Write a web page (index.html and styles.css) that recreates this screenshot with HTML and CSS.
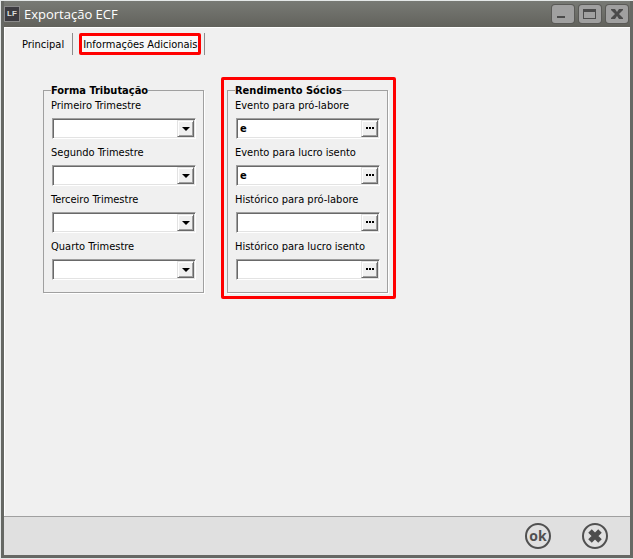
FILE: index.html
```html
<!DOCTYPE html>
<html lang="pt-BR">

<head>
    <meta charset="UTF-8">
    <meta name="viewport" content="width=device-width, initial-scale=1.0">
    <title>Exportação ECF</title>
    <link rel="stylesheet" href="styles.css">
</head>

<body>
    <div class="window">
        <header class="titlebar">
            <span class="app-icon">LF</span>
            <h1>Exportação ECF</h1>
            <div class="window-buttons">
                <button type="button" aria-label="Minimizar">
                    <svg width="22" height="18" viewBox="0 0 22 18"><path d="M5 11h8v2H5z" fill="#4b4b4b"/></svg>
                </button>
                <button type="button" aria-label="Maximizar">
                    <svg width="22" height="18" viewBox="0 0 22 18"><path d="M4 4h13v10H4zM5 7v6h11V7z" fill="#4b4b4b" fill-rule="evenodd"/></svg>
                </button>
                <button type="button" aria-label="Fechar">
                    <svg width="22" height="18" viewBox="0 0 22 18"><path d="M5 4h4l2 3 2-3h4v1l-4 4 4 4v1h-4l-2-3-2 3H5v-1l4-4-4-4z" fill="#4b4b4b"/></svg>
                </button>
            </div>
        </header>

        <main class="content">
            <nav class="tabs">
                <button type="button" class="tab">Principal</button>
                <button type="button" class="tab active"><span>Informações Adicionais</span></button>
            </nav>

            <form class="groups" id="ecf">
                <fieldset class="group">
                    <legend>Forma Tributação</legend>
                    <label for="tri1">Primeiro Trimestre</label>
                    <div class="field">
                        <select id="tri1"><option></option></select>
                        <span class="arrow"></span>
                    </div>
                    <label for="tri2">Segundo Trimestre</label>
                    <div class="field">
                        <select id="tri2"><option></option></select>
                        <span class="arrow"></span>
                    </div>
                    <label for="tri3">Terceiro Trimestre</label>
                    <div class="field">
                        <select id="tri3"><option></option></select>
                        <span class="arrow"></span>
                    </div>
                    <label for="tri4">Quarto Trimestre</label>
                    <div class="field">
                        <select id="tri4"><option></option></select>
                        <span class="arrow"></span>
                    </div>
                </fieldset>

                <div class="highlight">
                    <fieldset class="group">
                        <legend>Rendimento Sócios</legend>
                        <label for="evento-pro">Evento para pró-labore</label>
                        <div class="field">
                            <input type="text" id="evento-pro" value="e">
                            <button type="button" class="search" aria-label="Pesquisar"><svg width="9" height="4"><path d="M1 0h2v2H1zM4 0h2v2H4zM7 0h2v2H7z"/></svg></button>
                        </div>
                        <label for="evento-lucro">Evento para lucro isento</label>
                        <div class="field">
                            <input type="text" id="evento-lucro" value="e">
                            <button type="button" class="search" aria-label="Pesquisar"><svg width="9" height="4"><path d="M1 0h2v2H1zM4 0h2v2H4zM7 0h2v2H7z"/></svg></button>
                        </div>
                        <label for="hist-pro">Histórico para pró-labore</label>
                        <div class="field">
                            <input type="text" id="hist-pro">
                            <button type="button" class="search" aria-label="Pesquisar"><svg width="9" height="4"><path d="M1 0h2v2H1zM4 0h2v2H4zM7 0h2v2H7z"/></svg></button>
                        </div>
                        <label for="hist-lucro">Histórico para lucro isento</label>
                        <div class="field">
                            <input type="text" id="hist-lucro">
                            <button type="button" class="search" aria-label="Pesquisar"><svg width="9" height="4"><path d="M1 0h2v2H1zM4 0h2v2H4zM7 0h2v2H7z"/></svg></button>
                        </div>
                    </fieldset>
                </div>
            </form>
        </main>

        <footer class="actions">
            <button type="submit" form="ecf" class="round">ok</button>
            <button type="button" class="round" aria-label="Cancelar">
                <svg width="16" height="16" viewBox="0 0 16 16"><path d="M3 3l10 10M13 3L3 13" stroke="#4d4d4d" stroke-width="5"/></svg>
            </button>
        </footer>
    </div>
</body>

</html>
```
FILE: styles.css
```css
* {
    box-sizing: border-box;
}

body {
    margin: 0;
    padding: 1px 0 1px 1px;
    background: #e4e8e8;
    font-family: "DejaVu Sans Condensed", "DejaVu Sans", sans-serif;
    font-size: 11px;
    color: #000;
}

button {
    margin: 0;
    padding: 0;
    font: inherit;
    color: inherit;
}

svg {
    display: block;
}

.window {
    display: flex;
    flex-direction: column;
    min-height: calc(100vh - 2px);
    border: 3px solid #666864;
    border-top: 0;
    background: #f0f0f0;
}

/* title bar */
.titlebar {
    display: flex;
    align-items: center;
    height: 26px;
    background: linear-gradient(#787a75, #62625c);
}

.app-icon {
    width: 16px;
    height: 16px;
    border: 1px solid #8a8a8a;
    background: #3c3b40;
    color: #ddd;
    font: bold 8px/14px "Liberation Sans", sans-serif;
    text-align: center;
}

.titlebar h1 {
    flex: 1;
    margin: 0 0 0 4px;
    font: 13px/18px "Open Sans", sans-serif;
    color: #fff;
}

.window-buttons {
    display: flex;
    gap: 5px;
    padding-right: 2px;
}

.window-buttons button {
    width: 22px;
    height: 18px;
    border: 0;
    border-radius: 3px;
    background: #a0a0a0;
    box-shadow: 0 0 0 1px #5a5a57;
}

/* tabs */
.content {
    flex: 1;
    border-top: 1px solid #fff;
    border-left: 1px solid #fff;
}

.tabs {
    display: flex;
    padding: 5px 0 0 9px;
}

.tab {
    height: 22px;
    padding: 0 8px;
    border: 0;
    border-right: 1px solid #8c8c8c;
    background: none;
}

.tab.active {
    padding: 0 3px 0 6px;
}

.tab.active span {
    display: block;
    height: 22px;
    padding: 0 1px;
    border: 3px solid #f00;
    border-radius: 2px;
    background: #f8f8f8;
    line-height: 17px;
}

/* groups */
.groups {
    display: flex;
    align-items: flex-start;
    gap: 17px;
    padding: 22px 38px;
}

.groups > .group {
    margin-top: 6px;
}

.highlight {
    padding: 3px 5px 3px 3px;
    border: 3px solid #f00;
    border-radius: 2px;
}

.group {
    width: 161px;
    min-width: 0;
    margin: 0;
    padding: 1px 7px 12px;
    border: 1px solid #a0a0a0;
    box-shadow: 1px 1px #fff;
}

.group legend {
    padding: 0;
    font-weight: bold;
    line-height: 15px;
}

.group label {
    display: block;
    margin-bottom: 5px;
    line-height: 14px;
}

.field {
    position: relative;
    display: flex;
    height: 21px;
    margin: 0 0 7px 1px;
    border: 1px solid;
    border-color: #a0a0a0 #fff #fff #a0a0a0;
    background: #fff;
    box-shadow: inset 1px 1px #696969, inset -1px -1px #e3e3e3;
    padding: 1px;
}

.field:last-child {
    margin-bottom: 0;
}

.field select,
.field input {
    flex: 1;
    min-width: 0;
    padding: 0 0 0 2px;
    border: 0;
    outline: 0;
    appearance: none;
    background: none;
    font: inherit;
    font-weight: bold;
}

.search,
.arrow {
    display: flex;
    align-items: center;
    justify-content: center;
    width: 17px;
    border: 1px solid;
    border-color: #e3e3e3 #696969 #696969 #e3e3e3;
    background: #f0f0f0;
    box-shadow: inset 1px 1px #fff, inset -1px -1px #a0a0a0;
}

/* the arrow lies over the select so that all of it stays clickable */
.arrow {
    position: absolute;
    top: 1px;
    right: 1px;
    bottom: 1px;
    pointer-events: none;
}

.arrow::before {
    content: "";
    border: 4px solid transparent;
    border-top-color: #000;
    border-bottom: 0;
}

/* bottom bar */
.actions {
    display: flex;
    justify-content: flex-end;
    gap: 31px;
    padding: 6px 22px;
    border-top: 1px solid #a0a0a0;
    background: #e0e0e0;
}

.round {
    display: flex;
    align-items: center;
    justify-content: center;
    width: 26px;
    height: 26px;
    border: 2px solid #505050;
    border-radius: 50%;
    background: none;
    color: #505050;
    font: bold 14px/16px "Open Sans", sans-serif;
}
```
